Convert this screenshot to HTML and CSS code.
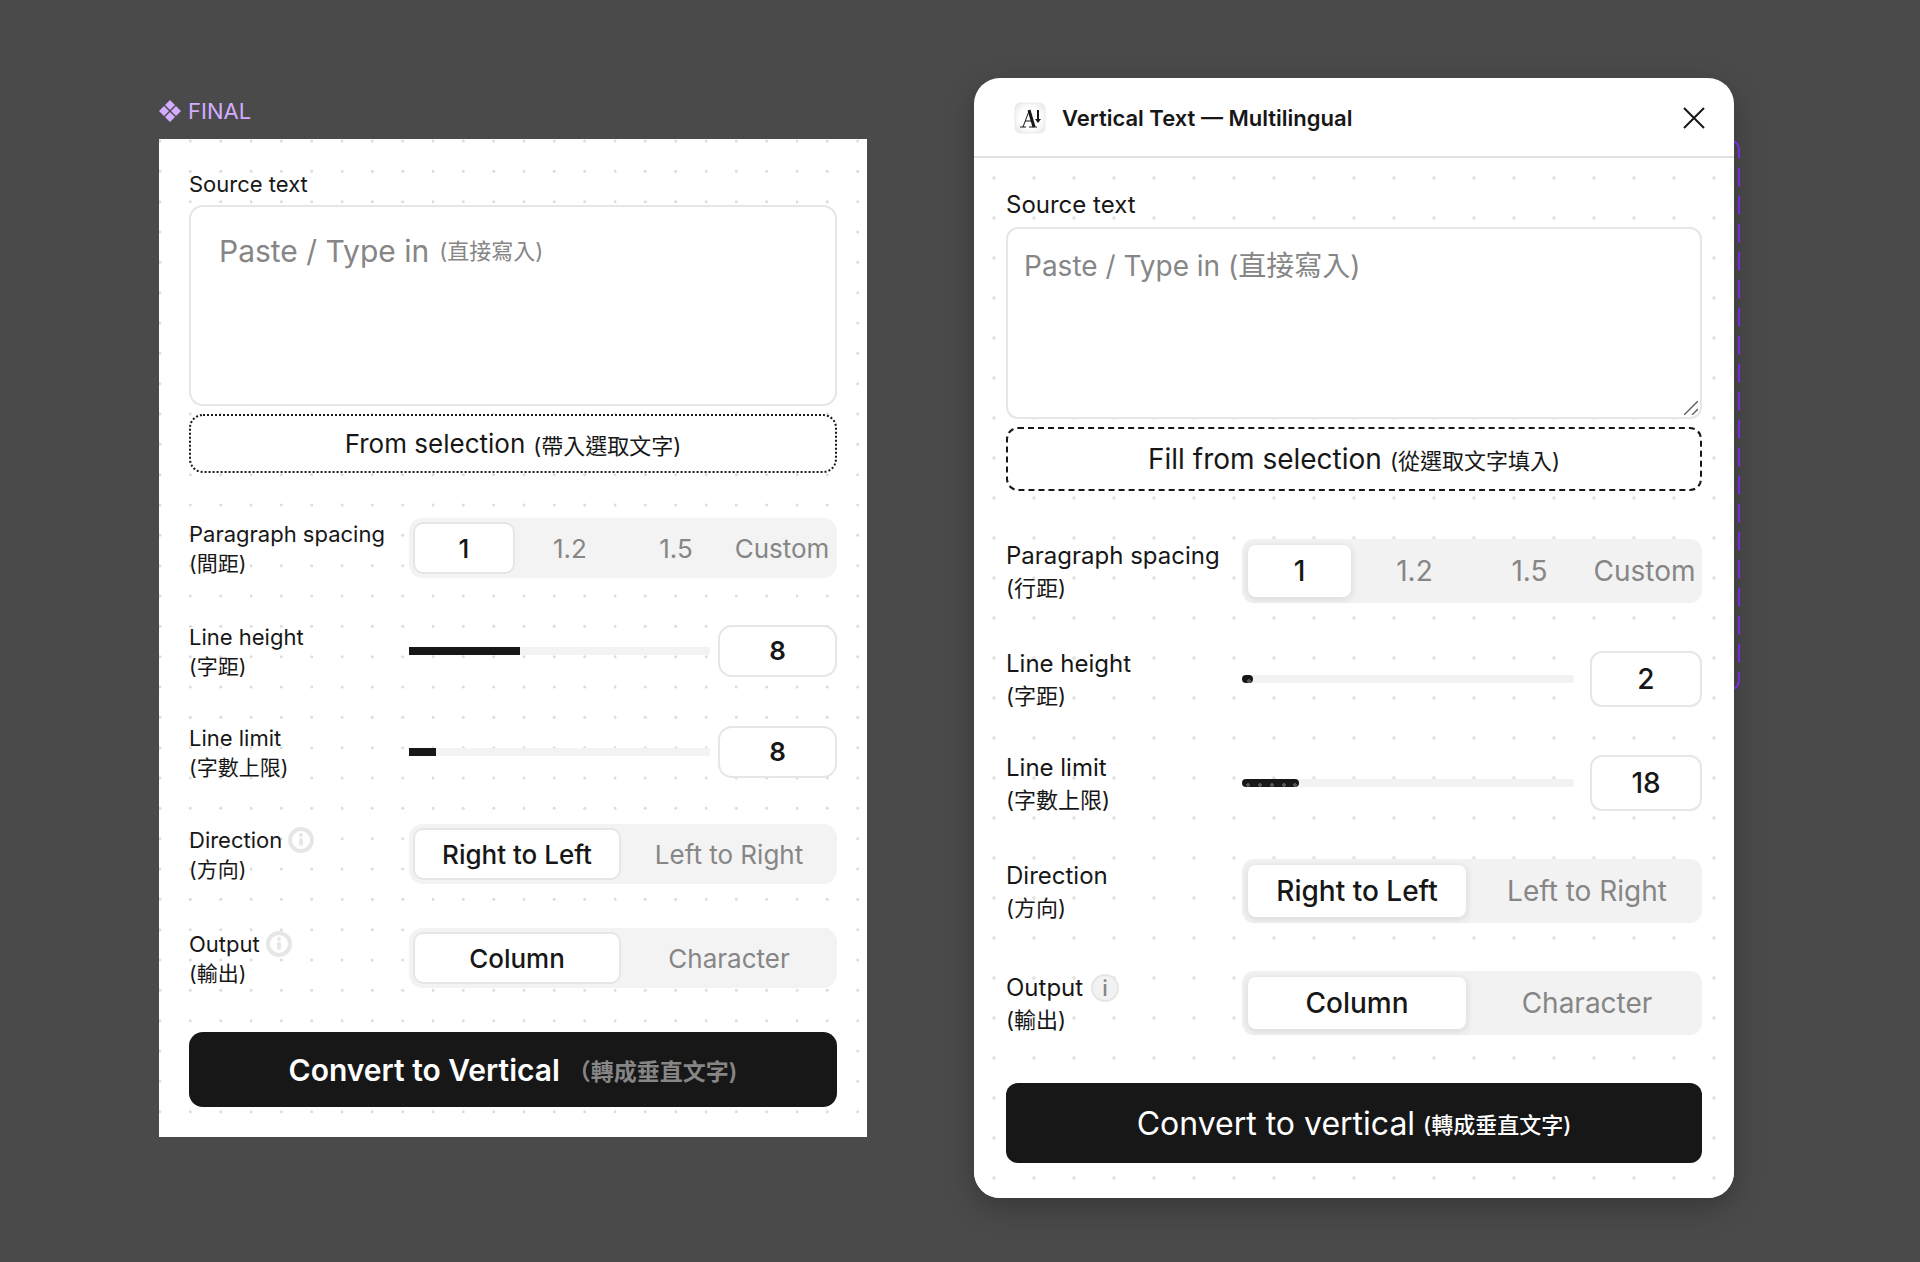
FILE: index.html
```html
<!DOCTYPE html>
<html lang="zh-Hant">
<head>
    <meta charset="utf-8">
    <title>Vertical Text — Multilingual</title>
    <link rel="stylesheet" href="styles.css">
</head>
<body>
    <main class="canvas">
        <!-- Component frame -->
        <section class="frame">
            <h2 class="frame-name">
                <svg class="component-icon" viewBox="0 0 22 22"><path d="M11 0l5 5-5 5-5-5zM5 6l5 5-5 5-5-5zM17 6l5 5-5 5-5-5zM11 12l5 5-5 5-5-5z"/></svg>
                FINAL
            </h2>
            <form class="panel panel-frame">
                <label class="source-label" for="frameSource">Source text</label>
                <div class="source-box">
                    <textarea id="frameSource" class="source"></textarea>
                    <div class="source-hint">Paste / Type in <small>(直接寫入)</small></div>
                </div>
                <button type="button" class="fill-button">From selection <small>(帶入選取文字)</small></button>

                <div class="fields">
                    <div class="field">
                        <div class="field-label">Paragraph spacing<br><small>(間距)</small></div>
                        <div class="segments segments-four">
                            <button type="button" class="segment active">1</button>
                            <button type="button" class="segment">1.2</button>
                            <button type="button" class="segment">1.5</button>
                            <button type="button" class="segment">Custom</button>
                        </div>
                    </div>
                    <div class="field field-range">
                        <label class="field-label" for="frameHeight">Line height<br><small>(字距)</small></label>
                        <input type="range" class="slider" style="--fill: 37%" aria-label="Line height" value="37">
                        <input type="text" id="frameHeight" class="number" value="8">
                    </div>
                    <div class="field field-range">
                        <label class="field-label" for="frameLimit">Line limit<br><small>(字數上限)</small></label>
                        <input type="range" class="slider" style="--fill: 9%" aria-label="Line limit" value="9">
                        <input type="text" id="frameLimit" class="number" value="8">
                    </div>
                    <div class="field">
                        <div class="field-label"><span class="label-line">Direction
                            <svg class="info-icon" viewBox="0 0 26 26"><circle cx="13" cy="13" r="11"/><path d="M13 13v4M13 8v.1"/></svg></span>
                            <small>(方向)</small></div>
                        <div class="segments">
                            <button type="button" class="segment active">Right to Left</button>
                            <button type="button" class="segment">Left to Right</button>
                        </div>
                    </div>
                    <div class="field">
                        <div class="field-label"><span class="label-line">Output
                            <svg class="info-icon" viewBox="0 0 26 26"><circle cx="13" cy="13" r="11"/><path d="M13 13v4M13 8v.1"/></svg></span>
                            <small>(輸出)</small></div>
                        <div class="segments">
                            <button type="button" class="segment active">Column</button>
                            <button type="button" class="segment">Character</button>
                        </div>
                    </div>
                </div>
                <button type="button" class="convert-button">Convert to Vertical <small>（轉成垂直文字)</small></button>
            </form>
        </section>

        <!-- Running plugin window -->
        <section class="plugin">
            <div class="window-shadow"></div>
            <svg class="selection-outline"><rect x="1" y="1" width="98" height="550" rx="10"/></svg>
            <div class="window">
                <header class="titlebar">
                    <svg class="plugin-logo" viewBox="0 0 32 32">
                        <defs>
                            <radialGradient id="logoFill" r="0.7">
                                <stop offset="0.5" stop-color="#fff"/>
                                <stop offset="1" stop-color="#e2e2e2"/>
                            </radialGradient>
                        </defs>
                        <rect x="1" y="1" width="30" height="30" rx="5"/>
                        <path class="logo-thin" d="M6 25h6M15 25h8M9 25l6-16M11 19h7"/>
                        <path class="logo-thick" d="M15 8l5 17"/>
                        <path class="logo-arrow" d="M24 8v10"/>
                        <path class="logo-head" d="M21 17h6l-3 4z"/>
                    </svg>
                    <h1 class="plugin-title">Vertical Text — Multilingual</h1>
                    <button type="button" class="close-button" aria-label="Close">
                        <svg viewBox="0 0 22 22"><path d="M1 1l20 20M21 1L1 21"/></svg>
                    </button>
                </header>
                <form class="panel panel-window">
                    <label class="source-label" for="source">Source text</label>
                    <div class="source-box">
                        <textarea id="source" class="source" placeholder="Paste / Type in (直接寫入)"></textarea>
                        <svg class="resize-grip" viewBox="0 0 14 14"><path d="M0 14L14 0M8 14l6-6"/></svg>
                    </div>
                    <button type="button" class="fill-button">Fill from selection <small>(從選取文字填入)</small></button>

                    <div class="fields">
                        <div class="field">
                            <div class="field-label">Paragraph spacing<br><small>(行距)</small></div>
                            <div class="segments segments-four">
                                <button type="button" class="segment active">1</button>
                                <button type="button" class="segment">1.2</button>
                                <button type="button" class="segment">1.5</button>
                                <button type="button" class="segment">Custom</button>
                            </div>
                        </div>
                        <div class="field field-range">
                            <label class="field-label" for="lineHeight">Line height<br><small>(字距)</small></label>
                            <input type="range" class="slider" style="--fill: 2%" aria-label="Line height" value="1">
                            <input type="text" id="lineHeight" class="number" value="2">
                        </div>
                        <div class="field field-range">
                            <label class="field-label" for="lineLimit">Line limit<br><small>(字數上限)</small></label>
                            <input type="range" class="slider" style="--fill: 16%" aria-label="Line limit" value="15">
                            <input type="text" id="lineLimit" class="number" value="18">
                        </div>
                        <div class="field">
                            <div class="field-label">Direction<br><small>(方向)</small></div>
                            <div class="segments">
                                <button type="button" class="segment active">Right to Left</button>
                                <button type="button" class="segment">Left to Right</button>
                            </div>
                        </div>
                        <div class="field">
                            <div class="field-label"><span class="label-line">Output <span class="info-badge">i</span></span>
                                <small>(輸出)</small></div>
                            <div class="segments">
                                <button type="button" class="segment active">Column</button>
                                <button type="button" class="segment">Character</button>
                            </div>
                        </div>
                    </div>
                    <button type="button" class="convert-button">Convert to vertical <small>(轉成垂直文字)</small></button>
                </form>
            </div>
        </section>
    </main>
</body>
</html>
```
FILE: styles.css
```css
* {
    box-sizing: border-box;
}
body {
    margin: 0;
    background: #4a4a4a;
    color: #171717;
    font-family: Inter, "Noto Sans CJK TC", sans-serif;
}
button,
input,
textarea {
    font: inherit;
    color: inherit;
    margin: 0;
}
small {
    font-size: 22px;
}
.canvas {
    display: grid;
    grid-template-columns: 708fr 760fr;
    column-gap: 107px;
    align-items: start;
    padding: 78px 186px 64px 159px;
}

/* Component frame */
.frame-name {
    display: flex;
    align-items: center;
    gap: 7px;
    height: 32px;
    margin: 17px 0 12px;
    font-size: 22px;
    font-weight: 400;
    color: #d3acff;
}
.component-icon {
    width: 22px;
    height: 22px;
    fill: currentColor;
}

/* Panels */
.panel {
    display: flex;
    flex-direction: column;
    background-color: #fff;
}
.panel-frame {
    padding: 30px;
    /* three dots per 91px tile */
    background-image: url("data:image/svg+xml,%3Csvg xmlns='http://www.w3.org/2000/svg' width='91' height='91' fill='%23dcdcdc'%3E%3Cg id='r'%3E%3Ccircle cx='1' cy='2' r='1.5'/%3E%3Ccircle cx='31.3' cy='2' r='1.5'/%3E%3Ccircle cx='61.7' cy='2' r='1.5'/%3E%3C/g%3E%3Cuse href='%23r' y='30.3'/%3E%3Cuse href='%23r' y='60.7'/%3E%3C/svg%3E");
}
.panel-window {
    padding: 31px 32px 35px;
    background-image: radial-gradient(circle, #e6e6e6 2px, transparent 2px);
    background-size: 40px 40px;
}
.source-label {
    font-size: 22px;
    line-height: 30px;
    margin-bottom: 6px;
}
.panel-window .source-label {
    font-size: 24px;
    line-height: 32px;
}
.source-box {
    position: relative;
    display: flex;
    margin-bottom: 8px;
}
.source {
    flex: 1;
    height: 201px;
    padding: 28px 30px;
    border: 2px solid #e6e6e6;
    border-radius: 14px;
    background: #fff;
    font-size: 30px;
    line-height: 36px;
    resize: none;
}
.panel-window .source {
    height: 192px;
    padding: 19px 16px;
    border-radius: 12px;
    font-size: 28px;
}
.source::placeholder {
    color: #868686;
}
.source-hint {
    position: absolute;
    top: 28px;
    left: 30px;
    display: flex;
    align-items: center;
    gap: 10px;
    font-size: 30px;
    line-height: 36px;
    color: #868686;
    pointer-events: none;
}
.resize-grip {
    position: absolute;
    right: 4px;
    bottom: 4px;
    width: 14px;
    height: 14px;
    fill: none;
    stroke: #555;
    stroke-width: 1.3;
}
.fill-button,
.convert-button {
    display: flex;
    align-items: center;
    justify-content: center;
    gap: 8px;
}
.fill-button {
    height: 59px;
    border: 2px dotted #171717;
    border-radius: 14px;
    background: #fff;
    font-size: 26px;
}
.panel-window .fill-button {
    height: 64px;
    border-style: dashed;
    border-radius: 12px;
    font-size: 28px;
}

/* Settings rows */
.fields {
    display: flex;
    flex-direction: column;
    gap: 44px;
    margin: 45px 0 44px;
}
.panel-window .fields {
    gap: 48px;
    margin: 48px 0;
}
.field {
    display: flex;
    align-items: center;
    height: 60px;
}
.field-range {
    height: 57px;
}
.panel-window .field {
    height: 64px;
}
.panel-window .field-range {
    height: 56px;
}
.field-label {
    flex: 0 0 220px;
    padding-top: 2px;
    font-size: 22px;
    line-height: 30px;
}
.panel-window .field-label {
    flex-basis: 236px;
    font-size: 24px;
    line-height: 32px;
}
.label-line {
    display: flex;
    align-items: center;
    gap: 6px;
}
.panel-window .label-line {
    gap: 8px;
}
.field-label small {
    display: inline-block;
    font-size: 21px;
    vertical-align: top;
}
.panel-window .field-label small {
    font-size: 22px;
}
.info-icon {
    width: 26px;
    height: 26px;
    fill: #fff;
    stroke: #e6e6e6;
    stroke-width: 4;
    stroke-linecap: round;
}
.info-badge {
    width: 28px;
    height: 28px;
    border: 2px solid #e6e6e6;
    border-radius: 50%;
    background: #f2f2f2;
    font-size: 22px;
    font-weight: 500;
    line-height: 24px;
    text-align: center;
    color: #868686;
}

/* Segmented control */
.segments {
    flex: 1;
    display: grid;
    grid-template-columns: repeat(2, 1fr);
    gap: 4px;
    height: 100%;
    padding: 4px;
    border-radius: 14px;
    background: #f3f3f3;
}
.segments-four {
    grid-template-columns: repeat(4, 1fr);
}
.segment {
    min-width: 0;
    padding: 0;
    border: 0;
    border-radius: 10px;
    background: none;
    font-size: 26px;
    color: #868686;
}
.segment.active {
    border: 2px solid #e6e6e6;
    background: #fff;
    font-weight: 500;
    color: #171717;
}
.panel-window .segments {
    gap: 12px;
    padding: 6px;
    border-radius: 12px;
    background: #f2f2f2;
}
.panel-window .segment {
    border-radius: 8px;
    font-size: 28px;
}
.panel-window .segment.active {
    border: 0;
    box-shadow: 0 2px 6px 2px rgba(0, 0, 0, 0.08);
}

/* Sliders */
.slider {
    flex: 1;
    min-width: 0;
    height: 8px;
    appearance: none;
    background: linear-gradient(to right, #171717 var(--fill), #f3f3f3 var(--fill));
}
.slider::-webkit-slider-thumb {
    appearance: none;
    width: 0;
    height: 8px;
}
.panel-window .slider {
    border-radius: 4px;
    background:
        linear-gradient(to right, transparent var(--fill), #f2f2f2 var(--fill)),
        radial-gradient(circle at 6px 6px, #555 2px, #171717 2px) 0 0 / 12px 8px;
}
.panel-window .slider::-webkit-slider-thumb {
    width: 8px;
    border-radius: 50%;
    background: radial-gradient(circle at 4px 6px, #555 2px, #171717 2px);
}
.number {
    width: 119px;
    height: 52px;
    margin-left: 8px;
    padding: 0;
    border: 2px solid #e6e6e6;
    border-radius: 14px;
    background: #fff;
    font-size: 26px;
    font-weight: 600;
    text-align: center;
}
.panel-window .number {
    width: 112px;
    height: 56px;
    margin-left: 16px;
    border-radius: 12px;
    font-size: 28px;
    font-weight: 500;
}

.convert-button {
    height: 75px;
    border: 0;
    border-radius: 14px;
    background: #171717;
    font-size: 30px;
    font-weight: 600;
    color: #fff;
}
.convert-button small {
    font-size: 23px;
    color: #868686;
}
.panel-window .convert-button {
    height: 80px;
    border-radius: 12px;
    font-size: 32px;
    font-weight: 400;
}
.panel-window .convert-button small {
    font-size: 22px;
    font-weight: 500;
    color: #fff;
}

/* Plugin window */
.plugin {
    position: relative;
}
.window-shadow {
    position: absolute;
    inset: 0;
    border-radius: 26px;
    box-shadow: 0 10px 28px rgba(0, 0, 0, 0.25);
}
.selection-outline {
    position: absolute;
    top: 61px;
    right: -6px;
    width: 100px;
    height: 552px;
    fill: none;
    stroke: #7a2bdc;
    stroke-width: 2;
    stroke-dasharray: 19 9;
    stroke-dashoffset: 1;
}
.window {
    position: relative;
    border-radius: 26px;
    overflow: hidden;
    background: #fff;
}
.titlebar {
    display: flex;
    align-items: center;
    height: 80px;
    padding: 2px 29px 0 40px;
    border-bottom: 2px solid #e0e0e0;
}
.plugin-logo {
    width: 32px;
    height: 32px;
    margin-right: 16px;
    fill: none;
    stroke: #171717;
}
.plugin-logo rect {
    fill: url(#logoFill);
    stroke: #ececec;
}
.logo-thick {
    stroke-width: 3;
}
.logo-arrow {
    stroke-width: 2;
}
.logo-head {
    fill: #171717;
    stroke: none;
}
.plugin-title {
    flex: 1;
    margin: 0;
    font-size: 22px;
    font-weight: 600;
}
.close-button {
    width: 22px;
    height: 22px;
    padding: 0;
    border: 0;
    background: none;
}
.close-button svg {
    display: block;
    fill: none;
    stroke: #171717;
    stroke-width: 2;
}
```
